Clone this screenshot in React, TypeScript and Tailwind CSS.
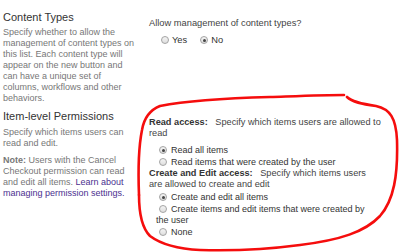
import React from "react";

function Radio({ checked = false }: { checked?: boolean }) {
  return (
    <span className="relative inline-block h-[8px] w-[8px] shrink-0 rounded-full border border-[#a3a3a3] bg-gradient-to-b from-[#f4f4f4] to-[#dedede]">
      {checked && <span className="absolute left-[1.5px] top-[1.5px] h-[3px] w-[3px] rounded-full bg-[#444]" />}
    </span>
  );
}

function Option({ label, checked = false }: { label: string; checked?: boolean }) {
  return (
    <div className="flex h-[12px] items-center pl-[10px]">
      <Radio checked={checked} />
      <span className="ml-[4px] text-[9px] leading-[12px] text-[#333]">{label}</span>
    </div>
  );
}

/** Red freehand loop drawn over the permissions block. */
function Scribble() {
  return (
    <svg className="pointer-events-none absolute left-0 top-0" width="400" height="252" viewBox="0 0 400 252">
      <g fill="none" stroke="#f50d0d" strokeWidth="2.6" strokeLinecap="round" strokeLinejoin="round">
        <path d="M139 195 C138 170 139 145 142 130 C144 118 150 110 160 106 C185 101 230 98 270 97 C300 96 325 95 344 95" />
        <path d="M347 97 C352 102 362 104 376 106 C390 109 396 118 397 140 C398 175 394 200 380 216 C365 232 340 240 300 245 C270 249 235 251 200 250 C180 249 162 245 150 236 C142 228 139 212 139 195" />
      </g>
    </svg>
  );
}

export default function App() {
  return (
    <div className="relative h-[252px] w-[400px] overflow-hidden bg-white font-['Liberation_Sans',Arial,sans-serif]">
      {/* Content types */}
      <div className="flex">
        <div className="w-[149px] shrink-0 pl-[3px] pt-[11px]">
          <div className="text-[11px] leading-[13px] text-[#333]">Content Types</div>
          <div className="mt-[3px] text-[9px] leading-[11px] text-[#777]">
            <div>Specify whether to allow the</div>
            <div>management of content types on</div>
            <div>this list. Each content type will</div>
            <div>appear on the new button and</div>
            <div>can have a unique set of</div>
            <div>columns, workflows and other</div>
            <div>behaviors.</div>
          </div>
        </div>
        <div className="pt-[18px] text-[9.3px] leading-[11px] text-[#444]">
          <div>Allow management of content types?</div>
          <div className="mt-[5px] flex h-[12px] items-center pl-[12px] text-[#333]">
            <Radio />
            <span className="ml-[3px]">Yes</span>
            <span className="ml-[13px]" />
            <Radio checked />
            <span className="ml-[3px]">No</span>
          </div>
        </div>
      </div>

      {/* Item-level permissions */}
      <div className="-mt-[2px] flex">
        <div className="w-[149px] shrink-0 pl-[3px] pt-[8px]">
          <div className="text-[11px] leading-[13px] text-[#333]">Item-level Permissions</div>
          <div className="mt-[4px] text-[9px] leading-[11px] text-[#777]">
            <div>Specify which items users can</div>
            <div>read and edit.</div>
            <div className="mt-[6px]">
              <span className="font-bold">Note:</span> Users with the Cancel
            </div>
            <div>Checkout permission can read</div>
            <div>
              and edit all items. <span className="text-[#4b2f8f]">Learn about</span>
            </div>
            <div className="text-[#4b2f8f]">managing permission settings.</div>
          </div>
        </div>
        <div className="pt-[15px] text-[9.2px] leading-[11px] text-[#444]">
          <div>
            <span className="mr-[5px] font-bold text-[#333]">Read access:</span> Specify which items users are allowed to
          </div>
          <div>read</div>
          <div className="mt-[5px]">
            <Option label="Read all items" checked />
            <Option label="Read items that were created by the user" />
          </div>
          <div>
            <span className="mr-[5px] font-bold text-[#333]">Create and Edit access:</span> Specify which items users
          </div>
          <div>are allowed to create and edit</div>
          <div className="mt-[1px]">
            <Option label="Create and edit all items" checked />
            <Option label="Create items and edit items that were created by" />
            <div className="pl-[7px] text-[9px] leading-[11px] text-[#333]">the user</div>
            <Option label="None" />
          </div>
        </div>
      </div>

      <Scribble />
    </div>
  );
}
